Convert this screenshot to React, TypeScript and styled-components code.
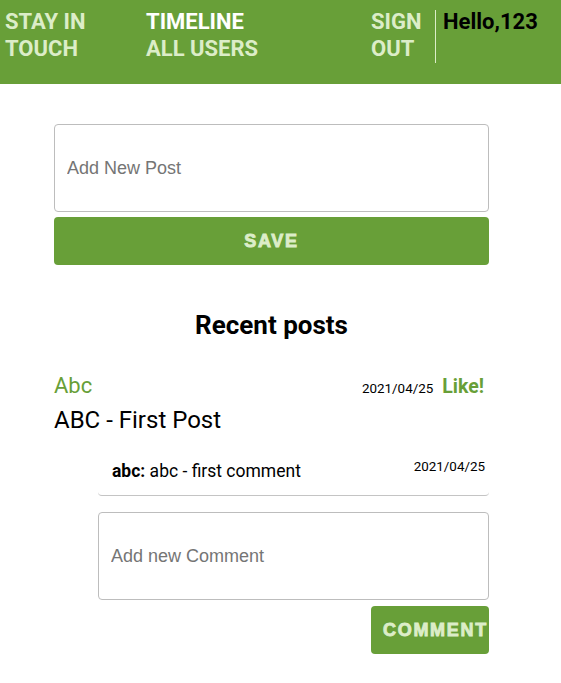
import React, { useState } from 'react';
import styled, { createGlobalStyle } from 'styled-components';

const GlobalStyle = createGlobalStyle`
  body {
    margin: 0;
    background: #fff;
    font-family: Roboto, "Liberation Sans", Arial, sans-serif;
  }
`;

const green = '#689f38';
const lightGreen = '#dcedc8';

const Header = styled.header`
  display: flex;
  align-items: flex-start;
  height: 84px;
  padding: 8px 0 0 5px;
  box-sizing: border-box;
  background-color: ${green};
`;

const NavLink = styled.a<{ $width: number; $active?: boolean }>`
  display: block;
  width: ${(p) => p.$width}px;
  font-size: 22px;
  font-weight: 700;
  line-height: 27px;
  color: ${(p) => (p.$active ? '#fff' : lightGreen)};
  text-decoration: none;
  cursor: pointer;

  span {
    display: block;
    color: ${lightGreen};
  }
`;

const Divider = styled.div`
  width: 1px;
  height: 53px;
  margin: 2px 7px 0 0;
  background-color: ${lightGreen};
`;

const Greeting = styled.div`
  font-size: 22px;
  font-weight: 700;
  line-height: 27px;
  color: #000;
`;

const Main = styled.main`
  width: 435px;
  padding: 40px 0 30px 54px;
`;

const TextInput = styled.input`
  display: block;
  width: 100%;
  height: 88px;
  box-sizing: border-box;
  padding: 0 12px;
  border: 1px solid #bdbdbd;
  border-radius: 4px;
  font-family: "Liberation Sans", Arial, sans-serif;
  font-size: 18px;
  color: #222;
  outline: none;

  &::placeholder {
    color: #757575;
  }
`;

const GreenButton = styled.button<{ $full?: boolean }>`
  display: block;
  width: ${(p) => (p.$full ? '100%' : '118px')};
  height: 48px;
  margin-top: ${(p) => (p.$full ? '5px' : '6px')};
  ${(p) => (p.$full ? '' : 'margin-left: auto;')}
  padding: 0 0 0 ${(p) => (p.$full ? '0' : '12px')};
  border: none;
  border-radius: 4px;
  background-color: ${green};
  color: ${lightGreen};
  font-family: "Liberation Sans", Arial, sans-serif;
  font-size: 18px;
  font-weight: 900;
  letter-spacing: 1.7px;
  -webkit-text-stroke: 0.9px ${lightGreen};
  text-align: ${(p) => (p.$full ? 'center' : 'left')};
  white-space: nowrap;
  overflow: hidden;
  cursor: pointer;
`;

const SectionTitle = styled.h2`
  margin: 44px 0 0;
  text-align: center;
  font-size: 26px;
  font-weight: 700;
  line-height: 32px;
  color: #000;
`;

const Post = styled.article`
  margin-top: 32px;
`;

const PostHead = styled.div`
  display: flex;
  align-items: baseline;
`;

const Author = styled.div`
  flex: 1;
  font-size: 22px;
  line-height: 26px;
  color: ${green};
`;

const DateText = styled.span<{ $size: number }>`
  font-size: ${(p) => p.$size}px;
  color: #000;
`;

const LikeButton = styled.button`
  margin: 0 5px 0 9px;
  padding: 0;
  border: none;
  background: none;
  font-family: Roboto, sans-serif;
  font-size: 19.5px;
  font-weight: 700;
  color: ${green};
  cursor: pointer;
`;

const PostBody = styled.p`
  margin: 6px 0 0;
  font-size: 24px;
  line-height: 30px;
  color: #000;
`;

const CommentArea = styled.div`
  margin: 15px 0 0 44px;
`;

const Comment = styled.div`
  display: flex;
  align-items: flex-start;
  padding: 9px 4px 12px 14px;
  border-radius: 4px;
  border-bottom: 1px solid #c4c4c4;
  margin-bottom: 16px;
`;

const CommentText = styled.div`
  flex: 1;
  font-size: 17.5px;
  line-height: 24px;
  color: #000;

  b {
    font-weight: 700;
  }
`;

export default function App() {
  const [post, setPost] = useState('');
  const [comment, setComment] = useState('');

  return (
    <>
      <GlobalStyle />
      <Header>
        <NavLink $width={141}>
          STAY IN
          <br />
          TOUCH
        </NavLink>
        <NavLink $width={225} $active>
          TIMELINE
          <span>ALL USERS</span>
        </NavLink>
        <NavLink $width={64}>
          SIGN
          <br />
          OUT
        </NavLink>
        <Divider />
        <Greeting>Hello,123</Greeting>
      </Header>
      <Main>
        <TextInput
          placeholder="Add New Post"
          value={post}
          onChange={(e) => setPost(e.target.value)}
        />
        <GreenButton $full>SAVE</GreenButton>

        <SectionTitle>Recent posts</SectionTitle>

        <Post>
          <PostHead>
            <Author>Abc</Author>
            <DateText $size={13.4}>2021/04/25</DateText>
            <LikeButton>Like!</LikeButton>
          </PostHead>
          <PostBody>ABC - First Post</PostBody>

          <CommentArea>
            <Comment>
              <CommentText>
                <b>abc:</b> abc - first comment
              </CommentText>
              <DateText $size={13.4}>2021/04/25</DateText>
            </Comment>
            <TextInput
              placeholder="Add new Comment"
              value={comment}
              onChange={(e) => setComment(e.target.value)}
            />
            <GreenButton>COMMENT</GreenButton>
          </CommentArea>
        </Post>
      </Main>
    </>
  );
}
